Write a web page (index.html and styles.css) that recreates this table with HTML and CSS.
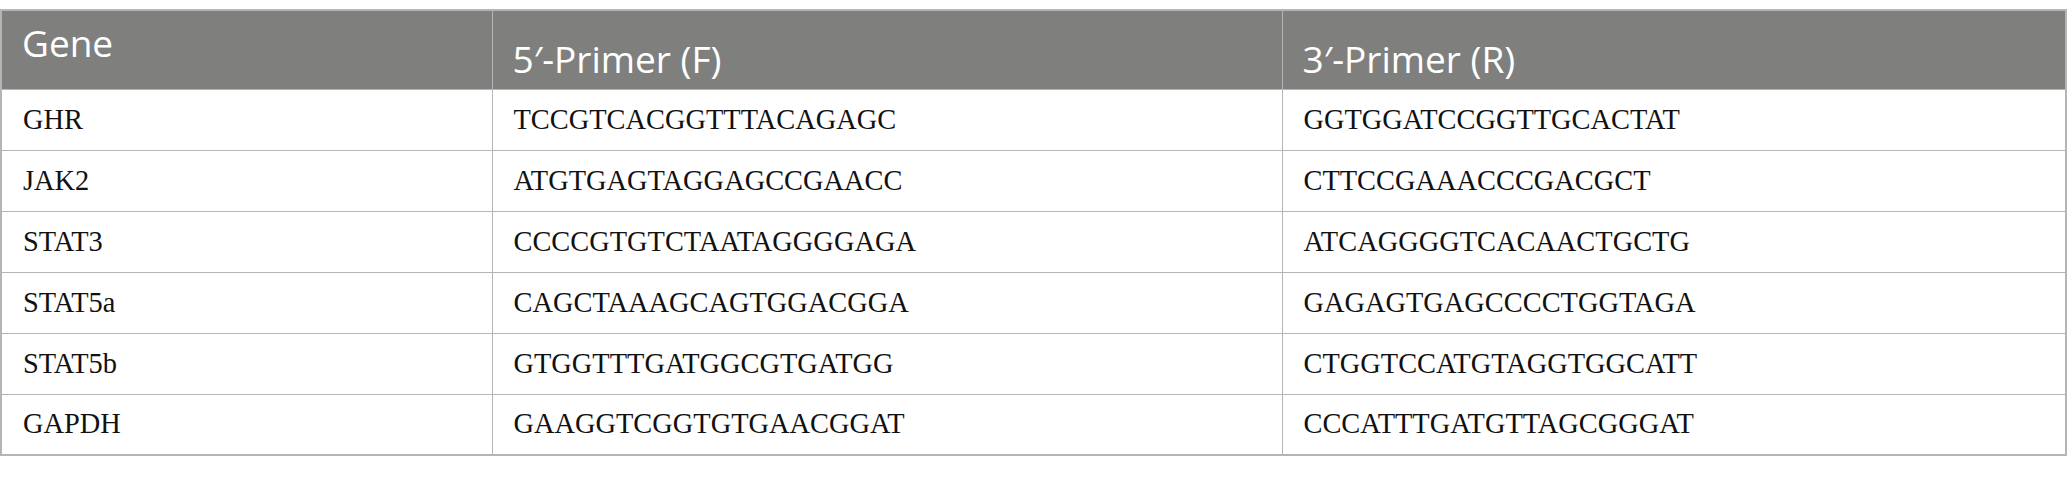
FILE: index.html
```html
<!DOCTYPE html>
<html>
<head>
<meta charset="utf-8">
<link rel="stylesheet" href="styles.css">
</head>
<body>
<table class="primers">
  <colgroup>
    <col class="c-gene">
    <col class="c-fwd">
    <col class="c-rev">
  </colgroup>
  <thead>
    <tr>
      <th class="th-gene">Gene</th>
      <th class="th-primer">5′-Primer (F)</th>
      <th class="th-primer">3′-Primer (R)</th>
    </tr>
  </thead>
  <tbody>
    <tr><td>GHR</td><td>TCCGTCACGGTTTACAGAGC</td><td>GGTGGATCCGGTTGCACTAT</td></tr>
    <tr><td>JAK2</td><td>ATGTGAGTAGGAGCCGAACC</td><td>CTTCCGAAACCCGACGCT</td></tr>
    <tr><td>STAT3</td><td>CCCCGTGTCTAATAGGGGAGA</td><td>ATCAGGGGTCACAACTGCTG</td></tr>
    <tr><td>STAT5a</td><td>CAGCTAAAGCAGTGGACGGA</td><td>GAGAGTGAGCCCCTGGTAGA</td></tr>
    <tr><td>STAT5b</td><td>GTGGTTTGATGGCGTGATGG</td><td>CTGGTCCATGTAGGTGGCATT</td></tr>
    <tr><td>GAPDH</td><td>GAAGGTCGGTGTGAACGGAT</td><td>CCCATTTGATGTTAGCGGGAT</td></tr>
  </tbody>
</table>
</body>
</html>
```

FILE: styles.css
```css
html, body {
  margin: 0;
  padding: 0;
  background: #ffffff;
}

body {
  padding: 9px 1px 0 0;
}

.primers {
  width: 100%;
  border-collapse: collapse;
  table-layout: fixed;
  border: 2px solid #b5b5b5;
}

.c-gene { width: 491px; }
.c-fwd { width: 790px; }

.primers th {
  background: #7f807e;
  color: #ffffff;
  font-family: "Open Sans", "Noto Sans", sans-serif;
  font-weight: 400;
  font-size: 37px;
  line-height: 42px;
  text-align: left;
  height: 79px;
  padding: 0 20px;
  border: 1px solid #b5b5b5;
  box-sizing: border-box;
}

.th-gene {
  vertical-align: top;
  padding-top: 11px !important;
}

.th-primer {
  vertical-align: bottom;
  padding-bottom: 9px !important;
}

.primers td {
  font-family: "Liberation Serif", "Times New Roman", serif;
  font-size: 28.4px;
  color: #111111;
  height: 61px;
  padding: 0 21px;
  border: 1px solid #b5b5b5;
  vertical-align: middle;
  box-sizing: border-box;
}
```
